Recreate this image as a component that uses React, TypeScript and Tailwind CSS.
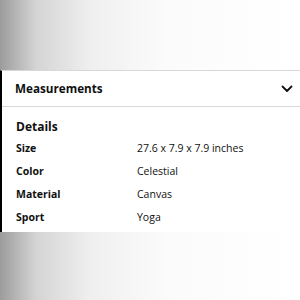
import React from "react";

const rows = [
  ["Size", "27.6 x 7.9 x 7.9 inches"],
  ["Color", "Celestial"],
  ["Material", "Canvas"],
  ["Sport", "Yoga"],
];

export default function App() {
  return (
    <div
      className="w-[300px] h-[300px] flex flex-col overflow-hidden bg-[linear-gradient(to_right,#9c9c9c_0%,#d4d4d4_12%,#efefef_30%,#fbfbfb_55%,#ffffff_100%)]"
      style={{ fontFamily: '"Open Sans", "Liberation Sans", sans-serif' }}
    >
      <div className="h-[70px] shrink-0" />
      <div className="bg-white border-l-[2px] border-l-black border-t border-t-[#d5d9d9] text-[#0f1111]">
        <div className="h-[36px] flex items-center justify-between pl-[13px] pr-[7px] border-b border-b-[#d5d9d9]">
          <span className="text-[11.7px] font-bold">Measurements</span>
          <svg width="12" height="8" viewBox="0 0 12 8" fill="none">
            <path d="M1.5 1.5 L6 6 L10.5 1.5" stroke="#0f1111" strokeWidth="1.8" strokeLinecap="round" strokeLinejoin="round" />
          </svg>
        </div>
        <div className="pl-[14px] pt-[10px] pb-[3px]">
          <div className="text-[12px] font-bold leading-[20px] mb-[1px]">Details</div>
          {rows.map(([k, v]) => (
            <div key={k} className="flex h-[22.7px] items-center">
              <span className="w-[121px] text-[10.5px] font-bold">{k}</span>
              <span className="text-[10.5px]">{v}</span>
            </div>
          ))}
        </div>
      </div>
    </div>
  );
}
